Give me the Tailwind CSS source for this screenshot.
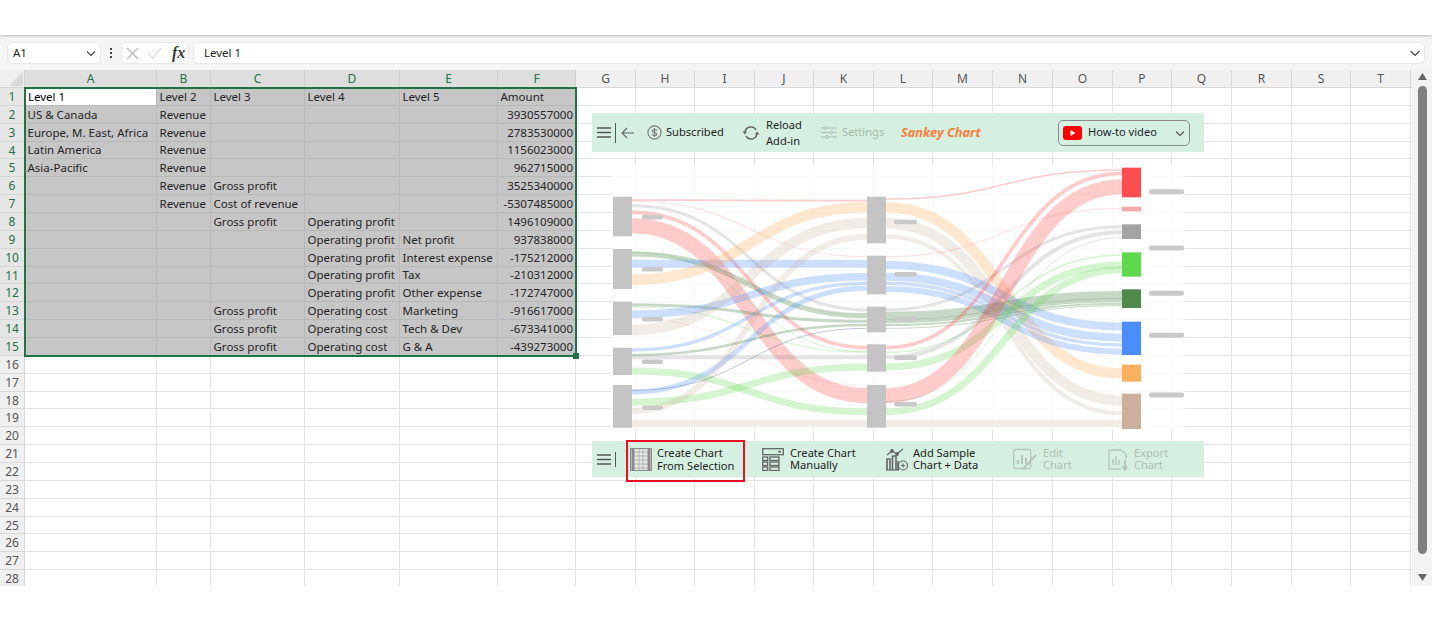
<!DOCTYPE html>
<html lang="en">
<head>
    <meta charset="UTF-8">
    <title>Sankey Chart add-in</title>
    <script src="https://cdn.jsdelivr.net/npm/@tailwindcss/browser@4"></script>
</head>
<body class="h-[621px] overflow-hidden bg-white font-['Noto_Sans',sans-serif] text-[#242424] flex flex-col">
    <div class="h-[35px] flex-none bg-white shadow-[0_1px_3px_rgba(0,0,0,0.25)] z-10"></div>

    <!-- formula bar -->
    <div class="h-[35px] flex-none bg-[#f5f5f5] flex items-center pl-[7px] pr-[7px] pt-[1px] text-[11.5px]">
        <div class="w-[94px] h-[22px] bg-white rounded-[5px] border border-[#e8e8e8] flex items-center justify-between pl-[5px] pr-[3px]">
            <span>A1</span>
            <svg width="12" height="12" viewBox="0 0 12 12" fill="none" stroke="#444" stroke-width="1.2"><path d="M2 4.5 6 8.5 10 4.5"/></svg>
        </div>
        <div class="w-[20px] flex flex-col items-center gap-[2px]">
            <span class="size-[2px] bg-[#444]"></span><span class="size-[2px] bg-[#444]"></span><span class="size-[2px] bg-[#444]"></span>
        </div>
        <div class="w-[68px] h-[22px] bg-white rounded-[5px] border border-[#e8e8e8] flex items-center pl-[4px]">
            <svg width="13" height="13" viewBox="0 0 13 13" fill="none" stroke="#b8b8b8" stroke-width="1.1"><path d="M1 1 12 12M12 1 1 12"/></svg>
            <svg class="ml-[8px]" width="15" height="12" viewBox="0 0 15 12" fill="none" stroke="#cfcfcf" stroke-width="1.1"><path d="M1 6 5.5 11 14 1"/></svg>
            <span class="ml-[10px] font-['Liberation_Serif',serif] italic font-bold text-[16px] leading-none text-[#3a3a3a]">fx</span>
        </div>
        <div class="ml-[4px] flex-1 h-[22px] bg-white rounded-[5px] border border-[#e8e8e8] flex items-center justify-between pl-[10px] pr-[3px]">
            <span>Level 1</span>
            <svg width="12" height="12" viewBox="0 0 12 12" fill="none" stroke="#444" stroke-width="1.2"><path d="M1.5 4 6 8.5 10.5 4"/></svg>
        </div>
    </div>

    <!-- sheet -->
    <div class="relative h-[516px] flex-none flex overflow-hidden bg-white">
        <div id="sheet" class="w-[1412px] flex-none h-[530px] grid content-start grid-cols-[25px_132px_54px_94px_95px_98px_78px_60px_59px_60px_59px_60px_59px_60px_60px_60px_59px_60px_60px_59px_60px_1px] grid-rows-[18px_repeat(28,17.86px)] text-[11.5px]"></div>

        <div class="w-[20px] flex-none bg-[#f3f3f3] flex flex-col items-center py-[3px]">
            <svg width="9" height="7" viewBox="0 0 9 7" fill="#666"><path d="M4.5 0 9 7H0Z"/></svg>
            <div class="mt-[6px] w-[9px] h-[468px] rounded-full bg-[#7f7f7f]"></div>
            <svg class="mt-auto mb-[2px]" width="9" height="7" viewBox="0 0 9 7" fill="#666"><path d="M4.5 7 0 0H9Z"/></svg>
        </div>

        <!-- selection outline -->
        <div class="absolute left-[24px] top-[17px] w-[553px] h-[270px] border-2 border-[#217346] pointer-events-none">
            <div class="absolute -right-[4px] -bottom-[4px] size-[6px] bg-[#217346]"></div>
        </div>

        <!-- add-in panel -->
        <div class="absolute left-[592px] top-[43px] w-[612px] h-[364px] flex flex-col text-[11.1px]">
            <div class="h-[39px] flex-none bg-[#d5efe0] flex items-center relative z-10">
                <svg class="ml-[5px]" width="14" height="11" viewBox="0 0 14 11" stroke="#555" stroke-width="1.5"><path d="M0 1H14M0 5.5H14M0 10H14"/></svg>
                <div class="ml-[4px] w-px h-[20px] bg-[#555]"></div>
                <svg class="ml-[5px]" width="13" height="12" viewBox="0 0 13 12" fill="none" stroke="#666" stroke-width="1.2"><path d="M6 1 1 6 6 11M1 6H13"/></svg>
                <svg class="ml-[13px]" width="15" height="15" viewBox="0 0 15 15" fill="none" stroke="#777" stroke-width="1.1"><circle cx="7.5" cy="7.5" r="6.6"/><path d="M9.8 5.4C9.3 4.3 5.4 4 5.4 5.9 5.4 8 9.8 7 9.8 9.2 9.8 11 5.7 10.8 5.1 9.6M7.5 3V12"/></svg>
                <span class="ml-[4px] w-[58px]">Subscribed</span>
                <svg class="ml-[18px]" width="18" height="16" viewBox="0 0 18 16" fill="none" stroke="#666" stroke-width="1.5"><path d="M3 7A6 6 0 0 1 14 4.8M15 9A6 6 0 0 1 4 11.2"/><path d="M0.5 6.5H5L3 9.5Z M12.8 9.5H17.5L15 6.5Z" fill="#666" stroke="none"/></svg>
                <span class="ml-[6px] w-[36px] leading-[16px]">Reload<br>Add-in</span>
                <svg class="ml-[19px]" width="16" height="13" viewBox="0 0 16 13" fill="none" stroke="#a9bdb1" stroke-width="1"><path d="M0 2H16M0 6.5H16M0 11H16"/><circle cx="4.5" cy="2" r="1.5" fill="#d5efe0"/><circle cx="10.5" cy="6.5" r="1.5" fill="#d5efe0"/><circle cx="6" cy="11" r="1.5" fill="#d5efe0"/></svg>
                <span class="ml-[5px] w-[42px] text-[#a5b8ac]">Settings</span>
                <span class="ml-[17px] w-[80px] font-bold italic text-[12.8px] text-[#f7803c] whitespace-nowrap">Sankey Chart</span>
                <div class="ml-[77px] w-[132px] h-[26px] border border-[#8a8a8a] rounded-[5px] flex items-center pl-[4px] pr-[3px]">
                    <svg width="19" height="14" viewBox="0 0 19 14"><rect width="19" height="14" rx="3" fill="#f00"/><path d="M7.5 4V10L12.5 7Z" fill="#fff"/></svg>
                    <span class="ml-[6px] text-[#1c2233]">How-to video</span>
                    <svg class="ml-auto" width="12" height="12" viewBox="0 0 12 12" fill="none" stroke="#555" stroke-width="1.2"><path d="M2 4.5 6 8.5 10 4.5"/></svg>
                </div>
            </div>

            <svg id="chart" class="h-[289px] w-[612px] flex-none blur-[0.5px]" viewBox="592 152 612 289"></svg>

            <div class="h-[36px] flex-none bg-[#d5efe0] flex items-center leading-[12.5px]">
                <svg class="ml-[5px]" width="14" height="11" viewBox="0 0 14 11" stroke="#555" stroke-width="1.5"><path d="M0 1H14M0 5.5H14M0 10H14"/></svg>
                <div class="ml-[4px] w-px h-[15px] bg-[#555]"></div>
                <div class="ml-[10px] mt-[4px] w-[119px] h-[42px] flex-none border-2 border-[#e81224] flex items-center pl-[2px]">
                    <svg class="-mt-[3px]" width="22" height="23" viewBox="0 0 22 23" fill="none" stroke="#8a8a8a"><rect x="0.5" y="0.5" width="21" height="22" fill="#e3e8e4"/><path d="M9 .5V22.5M13 .5V22.5M.5 4H21.5M.5 8H21.5M.5 12H21.5M.5 16H21.5M.5 20H21.5" stroke-width=".8" stroke="#a8aca9"/><path d="M3 .5V22.5M19 .5V22.5" stroke-width="3"/></svg>
                    <span class="ml-[5px] -mt-[3px] whitespace-nowrap">Create Chart<br>From Selection</span>
                </div>
                <svg class="ml-[17px]" width="22" height="23" viewBox="0 0 22 23" fill="none" stroke="#666" stroke-width="1.3"><rect x="0.7" y="0.7" width="20.6" height="6"/><path d="M16 3.7H19" stroke-width="1.6"/><rect x="0.7" y="9" width="5" height="3.5"/><rect x="8" y="9" width="9" height="3.5"/><rect x="0.7" y="14" width="5" height="3.5"/><rect x="8" y="14" width="9" height="3.5"/><rect x="0.7" y="19" width="5" height="3.5"/><rect x="8" y="19" width="9" height="3.5"/></svg>
                <span class="ml-[6px] w-[67px] whitespace-nowrap">Create Chart<br>Manually</span>
                <svg class="ml-[29px]" width="22" height="23" viewBox="0 0 22 23" fill="none" stroke="#666" stroke-width="1.2"><path d="M1 7 6 3 11 6 17 1"/><circle cx="6" cy="3" r="1.3" fill="#666"/><circle cx="11" cy="6" r="1.3" fill="#666"/><path d="M1 22V11H4V22M6.5 22V8H10V22M12 22V13" stroke-width="1.6"/><path d="M0 22H13"/><circle cx="17" cy="17.5" r="4.5" fill="#d5efe0"/><path d="M15 17.5H19M17 15.5V19.5"/></svg>
                <span class="ml-[5px] w-[66px] whitespace-nowrap text-[#222]">Add Sample<br>Chart + Data</span>
                <svg class="ml-[34px]" width="24" height="23" viewBox="0 0 24 23" fill="none" stroke="#b4c5ba" stroke-width="1.3"><rect x="0.7" y="1.5" width="17" height="19" rx="2"/><path d="M5 16V12M9 16V7M13 16V10" stroke-width="2"/><path d="M10 21 23 7" stroke-width="2"/></svg>
                <span class="ml-[6px] w-[28px] text-[#acbeb3]">Edit<br>Chart</span>
                <svg class="ml-[37px]" width="20" height="23" viewBox="0 0 20 23" fill="none" stroke="#b4c5ba" stroke-width="1.3"><path d="M13 2H1V21H13M13 2 18 6V11"/><path d="M5 17V11M8 17V8M11 17V12" stroke-width="1.5"/><path d="M17 12V21M14.5 18.5 17 21.5 19.5 18.5" stroke-width="2"/></svg>
                <span class="ml-[6px] w-[36px] text-[#acbeb3]">Export<br>Chart</span>
            </div>
        </div>
    </div>
    <div class="flex-1 bg-white"></div>

    <script>
        const rows = [
            ["Level 1", "Level 2", "Level 3", "Level 4", "Level 5", "Amount"],
            ["US & Canada", "Revenue", "", "", "", "3930557000"],
            ["Europe, M. East, Africa", "Revenue", "", "", "", "2783530000"],
            ["Latin America", "Revenue", "", "", "", "1156023000"],
            ["Asia-Pacific", "Revenue", "", "", "", "962715000"],
            ["", "Revenue", "Gross profit", "", "", "3525340000"],
            ["", "Revenue", "Cost of revenue", "", "", "-5307485000"],
            ["", "", "Gross profit", "Operating profit", "", "1496109000"],
            ["", "", "", "Operating profit", "Net profit", "937838000"],
            ["", "", "", "Operating profit", "Interest expense", "-175212000"],
            ["", "", "", "Operating profit", "Tax", "-210312000"],
            ["", "", "", "Operating profit", "Other expense", "-172747000"],
            ["", "", "Gross profit", "Operating cost", "Marketing", "-916617000"],
            ["", "", "Gross profit", "Operating cost", "Tech & Dev", "-673341000"],
            ["", "", "Gross profit", "Operating cost", "G & A", "-439273000"]
        ];
        const letters = "ABCDEFGHIJKLMNOPQRST".split("");
        let html = '<div class="bg-[#efefef] border-r border-b border-[#d4d4d4] flex items-end justify-end p-[1px]"><svg width="14" height="14" viewBox="0 0 14 14"><path d="M14 0V14H0Z" fill="#d9d9d9"/></svg></div>';

        letters.forEach((l, i) => {
            if (i < 6) html += `<div class="bg-[#dedede] border-r border-b border-[#cfcfcf] text-[#217346] text-[12px] flex items-center justify-center">${l}</div>`;
            else html += `<div class="bg-[#f0f0f0] border-r border-b border-[#d8d8d8] text-[#555] text-[12px] flex items-center justify-center">${l}</div>`;
        });
        html += '<div class="bg-[#f0f0f0] border-b border-[#d8d8d8]"></div>';

        for (let r = 0; r < 28; r++) {
            if (r < 15) html += `<div class="bg-[#e6e6e6] border-r border-b border-[#d4d4d4] text-[#217346] text-[12px] pt-[1px] flex items-center justify-center">${r + 1}</div>`;
            else html += `<div class="bg-[#f0f0f0] border-r border-b border-[#d8d8d8] text-[#555] text-[12px] pt-[1px] flex items-center justify-center">${r + 1}</div>`;

            for (let c = 0; c < 20; c++) {
                const text = r < 15 && c < 6 ? rows[r][c].replace("&", "&amp;") : "";
                if (r == 0 && c == 0) html += `<div class="bg-white border-r border-b border-[#b8b8b8] flex items-center pl-[3px] whitespace-nowrap text-black">${text}</div>`;
                else if (r < 15 && c == 5 && r > 0) html += `<div class="bg-[#c6c6c6] border-r border-b border-[#b8b8b8] flex items-center justify-end pr-[2px] whitespace-nowrap">${text}</div>`;
                else if (r < 15 && c < 6) html += `<div class="bg-[#c6c6c6] border-r border-b border-[#b8b8b8] flex items-center pl-[2.5px] whitespace-nowrap">${text}</div>`;
                else html += '<div class="border-r border-b border-[#e4e4e4]"></div>';
            }
            html += '<div class="border-b border-[#e4e4e4]"></div>';
        }
        document.getElementById("sheet").innerHTML = html;

        // chart: y values below are measured on the picture at 3x, from y=155
        const y = z => 155 + z / 3;
        const red = "rgba(255,70,70,.28)", pale = "rgba(255,70,70,.15)", gray = "rgba(130,130,130,.22)",
              blue = "rgba(70,135,255,.27)", navy = "rgba(40,70,140,.3)", green = "rgba(90,215,75,.26)",
              dark = "rgba(70,125,65,.3)", orange = "rgba(255,170,85,.28)", tan = "rgba(190,160,135,.2)";

        // from z, to z, width, colour
        const leftFlows = [
            [135, 137, 1.6, red], [138, 305, 1.2, pale], [152, 465, 3, gray], [172, 578, 3.6, red], [212, 722, 15, red],
            [291, 590, 1, green], [297, 482, 5, dark], [326, 326, 8, blue], [374, 157, 10.5, orange],
            [449, 499, 3, dark], [456, 592, 1.2, green], [478, 365, 7.5, blue], [490, 690, .8, pale], [525, 205, 10.5, tan],
            [585, 385, 3.5, blue], [600, 510, 2.5, dark], [607, 607, 4, gray], [648, 770, 7, green],
            [706, 520, 1, navy], [711, 400, 5, blue], [742, 636, 7, green], [768, 245, 6, tan], [805, 805, 7, tan]
        ];
        const rightFlows = [
            [132, 45, 1.6, red], [157, 655, 10.5, orange], [205, 737, 10.5, tan], [245, 775, 4, tan],
            [305, 160, 1.2, pale], [330, 515, 8, blue], [365, 548, 8, blue], [385, 570, 3.5, blue], [402, 590, 6, blue],
            [465, 215, 3, gray], [482, 420, 8, dark], [499, 436, 4, dark], [510, 446, 2, dark], [520, 452, 1, dark],
            [578, 55, 3.6, red], [592, 300, 1.5, green], [607, 232, 4, gray], [636, 330, 7, green],
            [722, 95, 15, red], [740, 248, 1, gray], [770, 345, 7, green], [805, 805, 7, tan]
        ];
        const band = (x0, x1, f) => {
            const m = (x0 + x1) / 2;
            return `<path d="M${x0} ${y(f[0])}C${m} ${y(f[0])} ${m} ${y(f[1])} ${x1} ${y(f[1])}" fill="none" stroke="${f[3]}" stroke-width="${f[2]}"/>`;
        };
        const node = (x, z0, z1, fill) => `<rect x="${x}" y="${y(z0)}" width="19" height="${(z1 - z0) / 3}" fill="${fill}"/>`;
        const pill = (x, z, w, h) => `<rect x="${x}" y="${y(z) - h / 2}" width="${w}" height="${h}" rx="2" fill="#c9c9c9"/>`;

        let svg = '<rect x="611" y="165" width="574" height="265" fill="#fff" fill-opacity=".78"/>';
        leftFlows.forEach(f => svg += band(632, 867, f));
        rightFlows.forEach(f => svg += band(886, 1122, f));
        [[125, 244], [282, 402], [440, 540], [578, 660], [690, 818]].forEach(n => svg += node(613, n[0], n[1], "#c4c4c4"));
        [[125, 265], [302, 418], [455, 532], [568, 650], [690, 818]].forEach(n => svg += node(867, n[0], n[1], "#c4c4c4"));
        [[38, 127, "#fb4e4e"], [155, 169, "#f6a9a9"], [208, 252, "#a3a3a3"], [292, 365, "#5ed84d"], [403, 459, "#4f8a4a"],
         [500, 600, "#4a8dfb"], [629, 680, "#fbb05f"], [716, 822, "#cdb09b"]].forEach(n => svg += node(1122, n[0], n[1], n[2]));
        [187, 343, 493, 620, 758].forEach(z => svg += pill(642, z, 21, 4.5));
        [201, 358, 493, 608, 748].forEach(z => svg += pill(894, z, 23, 4.5));
        [110, 279, 415, 541, 720].forEach(z => svg += pill(1149, z, 35, 5));
        document.getElementById("chart").innerHTML = svg;
    </script>
</body>
</html>
